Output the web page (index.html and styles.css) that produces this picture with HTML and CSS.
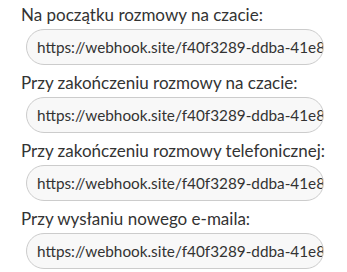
FILE: index.html
```html
<!DOCTYPE html>
<html lang="pl">
<head>
<meta charset="utf-8">
<title>Webhooki</title>
<link rel="stylesheet" href="styles.css">
</head>
<body>
<div class="form">
  <div class="field">
    <label class="label">Na początku rozmowy na czacie:</label>
    <input class="input" type="text" value="https://webhook.site/f40f3289-ddba-41e8-9c3a-2f1b7d5e6a90" readonly>
  </div>
  <div class="field">
    <label class="label">Przy zakończeniu rozmowy na czacie:</label>
    <input class="input" type="text" value="https://webhook.site/f40f3289-ddba-41e8-9c3a-2f1b7d5e6a90" readonly>
  </div>
  <div class="field">
    <label class="label">Przy zakończeniu rozmowy telefonicznej:</label>
    <input class="input" type="text" value="https://webhook.site/f40f3289-ddba-41e8-9c3a-2f1b7d5e6a90" readonly>
  </div>
  <div class="field">
    <label class="label">Przy wysłaniu nowego e-maila:</label>
    <input class="input" type="text" value="https://webhook.site/f40f3289-ddba-41e8-9c3a-2f1b7d5e6a90" readonly>
  </div>
</div>
</body>
</html>
```

FILE: styles.css
```css
html, body {
  margin: 0;
  padding: 0;
  background: #ffffff;
}
body {
  font-family: Lato, "Open Sans", sans-serif;
  color: #333333;
}
.form {
  display: flex;
  flex-direction: column;
  padding: 3px 0 0 21px;
  gap: 6px;
}
.field {
  display: flex;
  flex-direction: column;
}
.label {
  font-size: 17px;
  line-height: 24px;
}
.input {
  box-sizing: border-box;
  margin: 2px 0 0 5px;
  width: 298px;
  height: 36px;
  border: 1px solid #cccccc;
  border-radius: 18px;
  background: #f8f8f8;
  padding: 0 0 0 10px;
  font-family: Lato, "Open Sans", sans-serif;
  font-size: 15.3px;
  color: #333333;
  outline: none;
}
```
